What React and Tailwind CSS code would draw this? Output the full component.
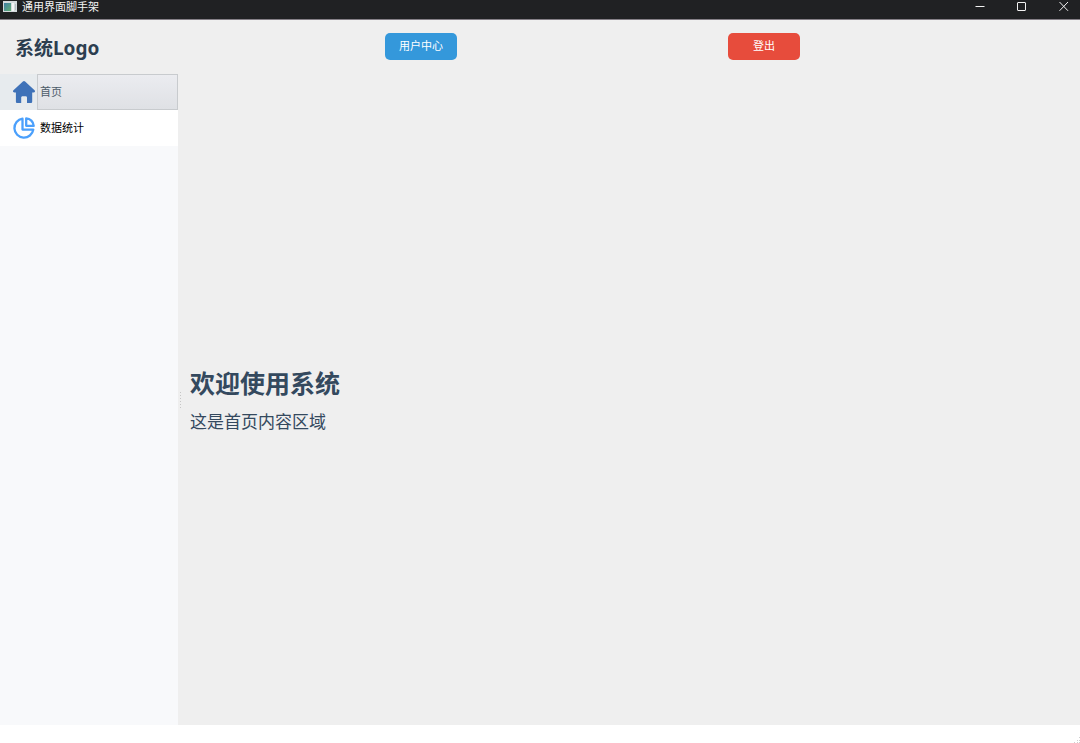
import React, { useState } from "react";

function AppIcon() {
  return (
    <svg width="14" height="12" viewBox="0 0 14 12" aria-hidden="true">
      <defs>
        <linearGradient id="app-pane" x1="0" y1="0" x2="1" y2="1">
          <stop offset="0" stopColor="#3f7fa6" />
          <stop offset="1" stopColor="#63b074" />
        </linearGradient>
      </defs>
      <rect width="14" height="11" fill="#d4dadd" />
      <rect x="1" y="2" width="7" height="8" fill="url(#app-pane)" />
      <rect x="9" y="2" width="2" height="8" fill="#f4f6f6" />
      <rect x="12" y="3" width="1" height="6" fill="#b4bdc2" />
    </svg>
  );
}

function HomeIcon() {
  return (
    <svg width="22" height="22" viewBox="0 0 22 22" aria-hidden="true">
      <path
        d="M9.9 0.5a1.7 1.7 0 0 1 2.2 0l9.2 8.6c1.2 1.1 0.8 2.3-0.7 2.3H19.2v9.1c0 1-0.6 1.5-1.5 1.5H14v-5.2c0-1-0.5-1.5-1.4-1.5H9.6c-0.9 0-1.4 0.5-1.4 1.5V22H4.4c-0.9 0-1.5-0.5-1.5-1.5v-9.1H1.4c-1.5 0-1.9-1.2-0.7-2.3z"
        fill="#3f72b8"
      />
    </svg>
  );
}

function PieIcon() {
  return (
    <svg
      width="22"
      height="22"
      viewBox="0 0 22 22"
      fill="none"
      stroke="#4ba0fc"
      strokeWidth="2.3"
      strokeLinejoin="round"
      strokeLinecap="round"
      aria-hidden="true"
    >
      <path d="M9.5 1.7A9.5 9.5 0 1 0 20.3 12.6H9.5z" />
      <path d="M13.2 1.4a8 8 0 0 1 7.5 7.4h-7.5z" />
    </svg>
  );
}

const menu = [
  { id: "home", label: "首页", Icon: HomeIcon },
  { id: "stats", label: "数据统计", Icon: PieIcon },
];

function TitleBar() {
  const control = "flex h-3 w-[10px] items-center justify-center";
  return (
    <div className="flex h-5 shrink-0 items-start justify-between border-b border-[#858087] bg-[#202123] text-[#f2f2f2]">
      <div className="flex items-center gap-[5px] pl-[3px]">
        <AppIcon />
        <span className="text-[11px] leading-[13px]">通用界面脚手架</span>
      </div>
      <div className="flex gap-8 pr-[11px]">
        <button type="button" aria-label="最小化" className={control}>
          <svg width="10" height="10" viewBox="0 0 10 10" stroke="currentColor" fill="none">
            <path d="M0.5 5.5h9" />
          </svg>
        </button>
        <button type="button" aria-label="最大化" className={control}>
          <svg width="10" height="10" viewBox="0 0 10 10" stroke="currentColor" fill="none">
            <rect x="0.5" y="1.5" width="8" height="8" rx="0.5" />
          </svg>
        </button>
        <button type="button" aria-label="关闭" className={control}>
          <svg width="10" height="10" viewBox="0 0 10 10" stroke="currentColor" fill="none">
            <path d="M0.5 1l8.5 8.8M9 1L0.5 9.8" />
          </svg>
        </button>
      </div>
    </div>
  );
}

function Header() {
  const button = "h-[27px] w-[72px] shrink-0 rounded-[5px] text-[11px] text-white";
  return (
    <header className="flex h-[54px] shrink-0 items-start pt-[13px] pr-[9px] pl-[15px]">
      <div className="w-[99px] shrink-0 text-[19px] leading-[30px] font-bold text-[#2c3e50]">
        系统Logo
      </div>
      <div className="flex-1" />
      <button type="button" className={button + " bg-[#3498db]"}>
        用户中心
      </button>
      <div className="flex-1" />
      <button type="button" className={button + " bg-[#e74c3c]"}>
        登出
      </button>
      <div className="flex-1" />
    </header>
  );
}

function Sidebar({ active, onSelect }) {
  return (
    <nav className="w-[178px] shrink-0 bg-[#f8f9fb]">
      {menu.map(({ id, label, Icon }) => {
        const selected = id === active;
        return (
          <button
            key={id}
            type="button"
            onClick={() => onSelect(id)}
            aria-current={selected ? "page" : undefined}
            className={
              "flex h-9 w-full items-stretch text-left text-[11px] " +
              (selected ? "bg-[#e7ebee] text-[#4c5b69]" : "bg-white text-black")
            }
          >
            <span className="flex w-[37px] shrink-0 items-center justify-end pr-[2px]">
              <Icon />
            </span>
            <span
              className={
                "flex flex-1 items-center border pl-[2px] " +
                (selected
                  ? "border-[#c8cbce] bg-linear-to-b from-[#ebecf0] to-[#dfe1e5]"
                  : "border-transparent")
              }
            >
              {label}
            </span>
          </button>
        );
      })}
    </nav>
  );
}

function SplitterHandle() {
  return (
    <div className="flex w-[5px] shrink-0 items-center justify-center" aria-hidden="true">
      <svg width="1" height="16" viewBox="0 0 1 16">
        <path d="M0.5 0v16" stroke="#c6c6c6" strokeDasharray="1 2" />
      </svg>
    </div>
  );
}

function StatusBar() {
  return (
    <footer className="flex h-[18px] shrink-0 items-end justify-end bg-white">
      <svg width="6" height="6" viewBox="0 0 6 6" fill="#cfcfcf" aria-hidden="true">
        <rect x="5" y="0" width="1" height="1" />
        <rect x="3" y="3" width="1" height="1" />
        <rect x="5" y="3" width="1" height="1" />
        <rect x="0" y="5" width="1" height="1" />
        <rect x="3" y="5" width="1" height="1" />
        <rect x="5" y="5" width="1" height="1" />
      </svg>
    </footer>
  );
}

export default function App() {
  const [active, setActive] = useState("home");
  return (
    <div className="flex min-h-screen flex-col bg-[#efefef] font-['Noto_Sans','Noto_Sans_CJK_SC',sans-serif]">
      <TitleBar />
      <Header />
      <div className="flex flex-1">
        <Sidebar active={active} onSelect={setActive} />
        <SplitterHandle />
        <main className="flex flex-1 flex-col justify-center gap-[10px] px-[7px] text-[#34495e]">
          <h1 className="text-[25px] leading-[34px] font-bold">欢迎使用系统</h1>
          <p className="text-[17px] leading-6">这是首页内容区域</p>
        </main>
      </div>
      <StatusBar />
    </div>
  );
}
